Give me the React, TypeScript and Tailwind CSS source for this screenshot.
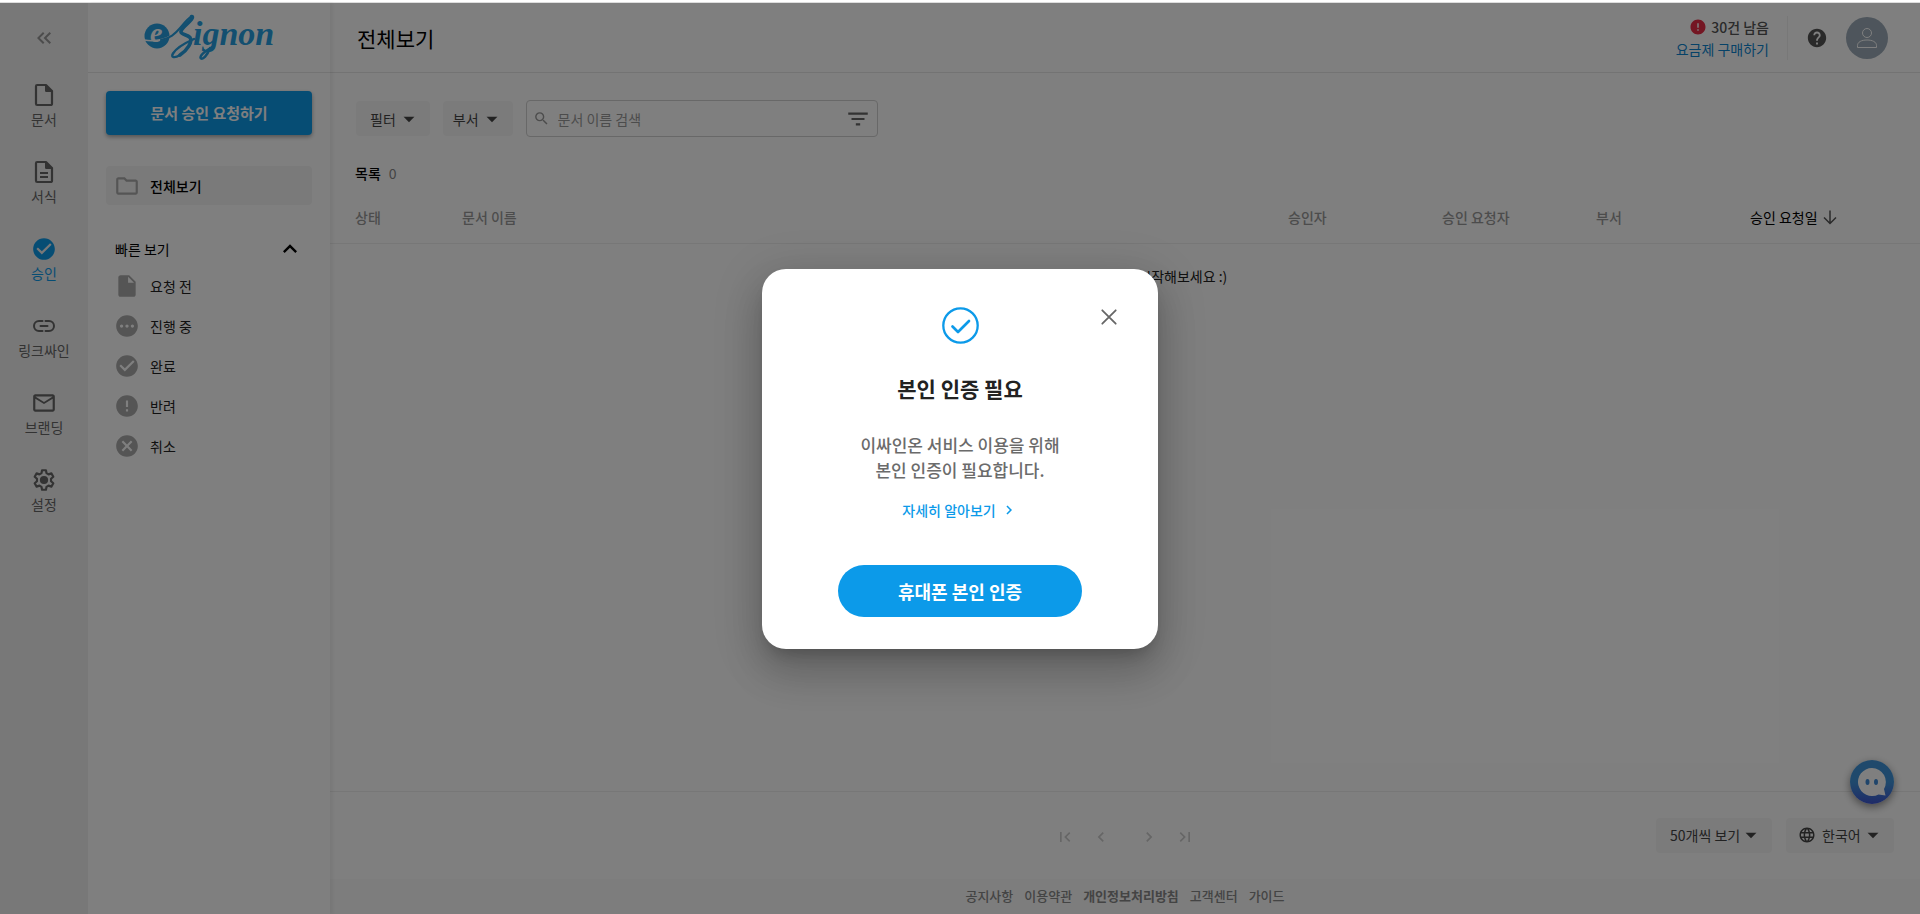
import React from "react";
import {
  MdArrowDropDown,
  MdCancel,
  MdCheckCircle,
  MdChevronLeft,
  MdChevronRight,
  MdError,
  MdFilterList,
  MdFirstPage,
  MdHelp,
  MdInsertDriveFile,
  MdKeyboardArrowUp,
  MdKeyboardDoubleArrowLeft,
  MdLanguage,
  MdLastPage,
  MdMailOutline,
  MdOutlineFolder,
  MdPending,
  MdSearch,
} from "react-icons/md";

type IconProps = { className?: string };

function FileIcon({ className, lines }: IconProps & { lines?: boolean }) {
  return (
    <svg viewBox="0 0 26 26" className={className} fill="none" aria-hidden="true">
      <path d="M6.200 3H15l6 6v12.800a1.200 1.200 0 0 1-1.200 1.200H6.200A1.200 1.200 0 0 1 5 21.800V4.200A1.200 1.200 0 0 1 6.200 3Z" stroke="currentColor" strokeWidth="2.200" strokeLinejoin="round" />
      <path d="M14 2.500 21.500 10h-6.300a1.200 1.200 0 0 1-1.200-1.200Z" fill="currentColor" />
      {lines && <path d="M9 14h8M9 18h8" stroke="currentColor" strokeWidth="2" />}
    </svg>
  );
}

function LinkIcon({ className }: IconProps) {
  return (
    <svg viewBox="0 0 26 26" className={className} fill="none" stroke="currentColor" strokeWidth="2" strokeLinecap="round" aria-hidden="true">
      <path d="M11.500 8H8a5 5 0 0 0 0 10h3.500M14.500 8H18a5 5 0 0 1 0 10h-3.500M9.500 13h7" />
    </svg>
  );
}

function GearIcon({ className }: IconProps) {
  return (
    <svg viewBox="0 0 24 24" className={className} aria-hidden="true">
      <path
        fill="none"
        stroke="currentColor"
        strokeWidth="2"
        strokeLinejoin="round"
        d="M10.200 3h3.600l.5 2.700 1.900 1.100 2.600-.9 1.800 3.100-2.100 1.800v2.400l2.100 1.800-1.800 3.100-2.600-.9-1.900 1.100-.5 2.700h-3.600l-.5-2.700-1.900-1.100-2.600.9L3.400 15l2.100-1.800v-2.400L3.400 9l1.800-3.100 2.600.9 1.900-1.100Z"
      />
      <circle cx="12" cy="12" r="3.800" fill="currentColor" />
    </svg>
  );
}

function Logo() {
  return (
    <svg viewBox="0 0 134 50" className="h-[50px] w-[134px]" role="img" aria-label="eSignon">
      <circle cx="15" cy="23" r="12.500" fill="#269fe0" />
      <text x="8" y="29" fontFamily="Liberation Serif, serif" fontWeight="700" fontStyle="italic" fontSize="28" fill="#fff">e</text>
      <path d="M2 27c9 1.500 18 .5 27-4" fill="none" stroke="#fff" strokeWidth="1.500" />
      <g transform="translate(2 1)" fill="none" stroke="#269fe0" strokeLinecap="round">
        <path d="M17 26c9-1.500 14-6 19.500-12.500C41 8 45 3.500 47.500 2.500" strokeWidth="2" />
        <path d="M47.500 2.500c1.800-.3 1 2-1.500 4.500-4 4.200-9.500 8-9 11 .4 2.500 6.500 2.600 9 5.500 3 4-3 13-10 17.500" strokeWidth="3.600" />
        <path d="M36 41c-5.500 3.500-9.500 2.500-7-1.500 3-5 12-10.500 21-14.500" strokeWidth="2.400" />
        <path d="M66 34c-3 8-7 11.500-9 10.500-2.500-2 4-7.500 12-12" strokeWidth="2.500" />
      </g>
      <text x="51" y="32" fontFamily="Liberation Serif, serif" fontWeight="700" fontStyle="italic" fontSize="34" fill="#269fe0">ignon</text>
    </svg>
  );
}

const railItems = [
  { label: "문서", icon: <FileIcon className="size-[26px]" /> },
  { label: "서식", icon: <FileIcon lines className="size-[26px]" /> },
  { label: "승인", icon: <MdCheckCircle className="size-[26px]" />, active: true },
  { label: "링크싸인", icon: <LinkIcon className="size-[26px]" /> },
  { label: "브랜딩", icon: <MdMailOutline className="size-[26px]" /> },
  { label: "설정", icon: <GearIcon className="size-[26px]" /> },
];

const quickViews = [
  { label: "요청 전", Icon: MdInsertDriveFile },
  { label: "진행 중", Icon: MdPending },
  { label: "완료", Icon: MdCheckCircle },
  { label: "반려", Icon: MdError },
  { label: "취소", Icon: MdCancel },
];

const footerLinks = ["공지사항", "이용약관", "개인정보처리방침", "고객센터", "가이드"];

function Rail() {
  return (
    <nav aria-label="주 메뉴" className="flex w-[88px] shrink-0 flex-col items-center bg-[#f0f0f0] pt-[23px]">
      <button type="button" aria-label="메뉴 접기" className="text-[#999]">
        <MdKeyboardDoubleArrowLeft className="size-6" />
      </button>
      <ul className="mt-8 flex flex-col gap-[30px]">
        {railItems.map((item) => (
          <li key={item.label}>
            <a href="#" className={item.active ? "flex flex-col items-center gap-px text-[#0c9ae9]" : "flex flex-col items-center gap-px text-[#666]"}>
              {item.icon}
              <span className="text-sm leading-5">{item.label}</span>
            </a>
          </li>
        ))}
      </ul>
    </nav>
  );
}

function Sidebar() {
  return (
    <aside className="z-10 flex w-[242px] shrink-0 flex-col bg-white shadow-[3px_0_3px_rgba(0,0,0,0.05)]">
      <div className="flex h-[70px] items-center justify-center border-b border-[#e6e6e6]">
        <a href="#"><Logo /></a>
      </div>
      <div className="flex flex-col px-[18px] pt-[18px]">
        <button type="button" className="h-11 rounded bg-[#0c9ae9] text-[15px] font-bold text-white shadow-[0_2px_4px_rgba(0,0,0,0.35)]">
          문서 승인 요청하기
        </button>
        <a href="#" className="mt-[31px] flex h-[39px] items-center gap-2.5 rounded-sm bg-[#f4f4f4] pl-2 text-sm font-medium text-black">
          <MdOutlineFolder className="size-[26px] text-[#aaa]" />
          전체보기
        </a>
        <button type="button" className="mt-8 flex h-6 items-center justify-between pr-2 pl-[9px] text-sm text-black">
          빠른 보기
          <MdKeyboardArrowUp className="size-7" />
        </button>
        <ul className="mt-[5px]">
          {quickViews.map(({ label, Icon }) => (
            <li key={label}>
              <a href="#" className="flex h-10 items-center gap-2.5 pl-2 text-sm text-[#222]">
                <Icon className="size-[26px] text-[#aaa]" />
                {label}
              </a>
            </li>
          ))}
        </ul>
      </div>
    </aside>
  );
}

function PageHeader() {
  return (
    <header className="flex h-[70px] items-center justify-between border-b border-[#e6e6e6] pr-8 pl-[27px]">
      <h1 className="pt-0.5 text-[21px] text-black">전체보기</h1>
      <div className="flex items-center">
        <div className="flex flex-col items-end pr-[18px] text-sm leading-[22px]">
          <span className="flex items-center gap-1 font-medium text-[#555]">
            <MdError className="size-[18px] text-[#e82c46]" />
            30건 남음
          </span>
          <a href="#" className="text-[#0c85d0]">요금제 구매하기</a>
        </div>
        <div className="h-11 w-px bg-[#f0f0f0]" />
        <button type="button" aria-label="도움말" className="mx-[18px] text-[#555]">
          <MdHelp className="size-[22px]" />
        </button>
        <button type="button" aria-label="내 계정" className="flex size-[42px] items-center justify-center rounded-full bg-[#9cabb8]">
          <svg viewBox="0 0 24 24" className="size-6" fill="none" stroke="#fff" strokeWidth="1" aria-hidden="true">
            <circle cx="12" cy="7" r="4.500" />
            <path d="M2.500 21.500v-2c0-3.500 4-5.500 9.500-5.500s9.500 2 9.500 5.500v2Z" />
          </svg>
        </button>
      </div>
    </header>
  );
}

function Toolbar() {
  return (
    <div className="flex items-center gap-[13px] pt-[27px] pl-[26px]">
      <button type="button" className="flex h-[35px] items-center rounded bg-[#f6f6f6] pr-2 pl-3.5 text-sm text-[#444]">
        필터
        <MdArrowDropDown className="size-[26px]" />
      </button>
      <button type="button" className="flex h-[35px] items-center rounded bg-[#f6f6f6] pr-2 pl-2.5 text-sm text-[#444]">
        부서
        <MdArrowDropDown className="size-[26px]" />
      </button>
      <div className="flex h-[37px] w-[352px] items-center rounded border border-[#d0d0d0] px-1.5">
        <MdSearch className="size-[17px] text-[#999]" />
        <input type="text" aria-label="문서 이름 검색" placeholder="문서 이름 검색" className="min-w-0 flex-1 bg-transparent pl-2 text-sm outline-none placeholder:text-[#999]" />
        <button type="button" aria-label="상세 검색" className="text-[#666]">
          <MdFilterList className="size-[26px]" />
        </button>
      </div>
    </div>
  );
}

function ApprovalTable() {
  return (
    <table className="mt-2 w-full table-fixed border-collapse text-left text-sm">
      <thead>
        <tr className="h-[52px] border-b border-[#eee] text-[#999]">
          <th className="w-[132px] pl-[25px] font-medium">상태</th>
          <th className="font-medium">문서 이름</th>
          <th className="w-[154px] font-medium">승인자</th>
          <th className="w-[154px] font-medium">승인 요청자</th>
          <th className="w-[154px] font-medium">부서</th>
          <th className="w-[170px] font-normal text-black">
            <span className="flex items-center gap-0.5">
              승인 요청일
              <svg viewBox="0 0 20 20" className="size-5" fill="none" stroke="#555" strokeWidth="1.500" aria-hidden="true">
                <path d="M10 3.500v13M4 10.500l6 6 6-6" />
              </svg>
            </span>
          </th>
        </tr>
      </thead>
      <tbody>
        <tr>
          <td colSpan={6} className="h-[66px] text-center text-[#222]">지금 새 승인 요청을 시작해보세요 :)</td>
        </tr>
      </tbody>
    </table>
  );
}

function Pagination() {
  return (
    <div className="grid h-[88px] grid-cols-[1fr_auto_1fr] items-center border-t border-[#eee] pb-px">
      <div />
      <div className="mt-1 flex items-center text-[#ccc]">
        <button type="button" aria-label="첫 페이지" disabled className="mr-4"><MdFirstPage className="size-5" /></button>
        <button type="button" aria-label="이전 페이지" disabled className="mr-7"><MdChevronLeft className="size-5" /></button>
        <button type="button" aria-label="다음 페이지" disabled className="mr-4"><MdChevronRight className="size-5" /></button>
        <button type="button" aria-label="마지막 페이지" disabled><MdLastPage className="size-5" /></button>
      </div>
      <div className="flex justify-end gap-3.5 pr-[26px] text-sm text-[#444]">
        <div className="relative flex h-[35px] items-center rounded bg-[#f6f6f6]">
          <select aria-label="페이지당 문서 수" className="h-full w-[116px] appearance-none bg-transparent pl-3.5 outline-none">
            <option>50개씩 보기</option>
          </select>
          <MdArrowDropDown className="pointer-events-none absolute right-2 size-[26px]" />
        </div>
        <div className="relative flex h-[35px] items-center rounded bg-[#f6f6f6]">
          <MdLanguage className="pointer-events-none absolute left-3 size-[18px]" />
          <select aria-label="언어" className="h-full w-[108px] appearance-none bg-transparent pl-9 outline-none">
            <option>한국어</option>
          </select>
          <MdArrowDropDown className="pointer-events-none absolute right-2 size-[26px]" />
        </div>
      </div>
    </div>
  );
}

function ChatButton() {
  return (
    <button type="button" aria-label="채팅 상담" className="absolute right-[26px] bottom-[110px] flex size-11 items-center justify-center rounded-full bg-linear-to-b from-[#3f93d8] from-50% to-[#3f55d0] shadow-[0_3px_8px_rgba(0,0,0,0.45)]">
      <svg viewBox="0 0 28 28" className="size-7" aria-hidden="true">
        <path d="M14 0a14 14 0 1 0 6.500 26.400L27.500 27.500 26 21A14 14 0 0 0 14 0Z" fill="#fff" />
        <ellipse cx="9.500" cy="14" rx="2" ry="3" fill="#3f8ad6" />
        <ellipse cx="18" cy="14" rx="2" ry="3" fill="#3f8ad6" />
      </svg>
    </button>
  );
}

function VerificationDialog() {
  return (
    <div className="absolute inset-0 z-20 flex items-center justify-center bg-black/50">
      <div
        role="dialog"
        aria-modal="true"
        aria-labelledby="verify-title"
        className="relative flex w-[396px] flex-col items-center rounded-3xl bg-white pt-[38px] pb-8 shadow-[0_11px_15px_-7px_rgba(0,0,0,0.2),0_24px_38px_3px_rgba(0,0,0,0.14),0_9px_46px_8px_rgba(0,0,0,0.12)]"
      >
        <button type="button" aria-label="닫기" className="absolute top-9 right-[37px] text-[#666]">
          <svg viewBox="0 0 24 24" className="size-6" fill="none" stroke="currentColor" strokeWidth="1.800" strokeLinecap="round" aria-hidden="true">
            <path d="M5.300 5.300l13.400 13.400M18.700 5.300 5.300 18.700" />
          </svg>
        </button>
        <svg viewBox="0 0 37 37" className="size-[37px] text-[#0c9ae9]" fill="none" stroke="currentColor" aria-hidden="true">
          <circle cx="18.500" cy="18.500" r="17.200" strokeWidth="2.300" />
          <path d="M10.500 19.500l5.500 5.500 11-11" strokeWidth="2.700" strokeLinecap="round" strokeLinejoin="round" />
        </svg>
        <h2 id="verify-title" className="mt-7 text-[21px] leading-8 font-bold text-[#222]">본인 인증 필요</h2>
        <p className="mt-7 text-center text-[17px] leading-[25px] font-medium text-[#6b6b6b]">
          이싸인온 서비스 이용을 위해
          <br />
          본인 인증이 필요합니다.
        </p>
        <a href="#" className="mt-[18px] flex items-center gap-1 text-sm leading-5 font-medium text-[#0c9ae9]">
          자세히 알아보기
          <MdChevronRight className="size-[18px]" />
        </a>
        <button type="button" className="mt-[45px] h-[52px] w-[244px] rounded-full bg-[#0c9ae9] text-lg font-bold text-white">
          휴대폰 본인 인증
        </button>
      </div>
    </div>
  );
}

export default function App() {
  return (
    <div className="flex min-h-screen flex-col bg-white font-['Noto_Sans_CJK_KR','Noto_Sans',sans-serif]">
      <div className="h-[3px] border-b border-[#ddd]" />
      <div className="relative flex flex-1">
        <Rail />
        <Sidebar />
        <div className="flex min-w-0 flex-1 flex-col">
          <PageHeader />
          <main className="flex flex-1 flex-col">
            <Toolbar />
            <p className="mt-[26px] flex gap-2 pl-[25px] text-sm leading-5">
              <span className="font-medium text-black">목록</span>
              <span className="text-[#888]">0</span>
            </p>
            <ApprovalTable />
            <div className="flex-1" />
            <Pagination />
          </main>
          <footer className="flex h-[35px] items-center justify-center gap-[11px] bg-[#fafafa] pb-0.5 text-[13px] font-medium text-[#888]">
            {footerLinks.map((label) => (
              <a key={label} href="#" className={label === "개인정보처리방침" ? "font-bold" : ""}>{label}</a>
            ))}
          </footer>
        </div>
        <ChatButton />
        <VerificationDialog />
      </div>
    </div>
  );
}
